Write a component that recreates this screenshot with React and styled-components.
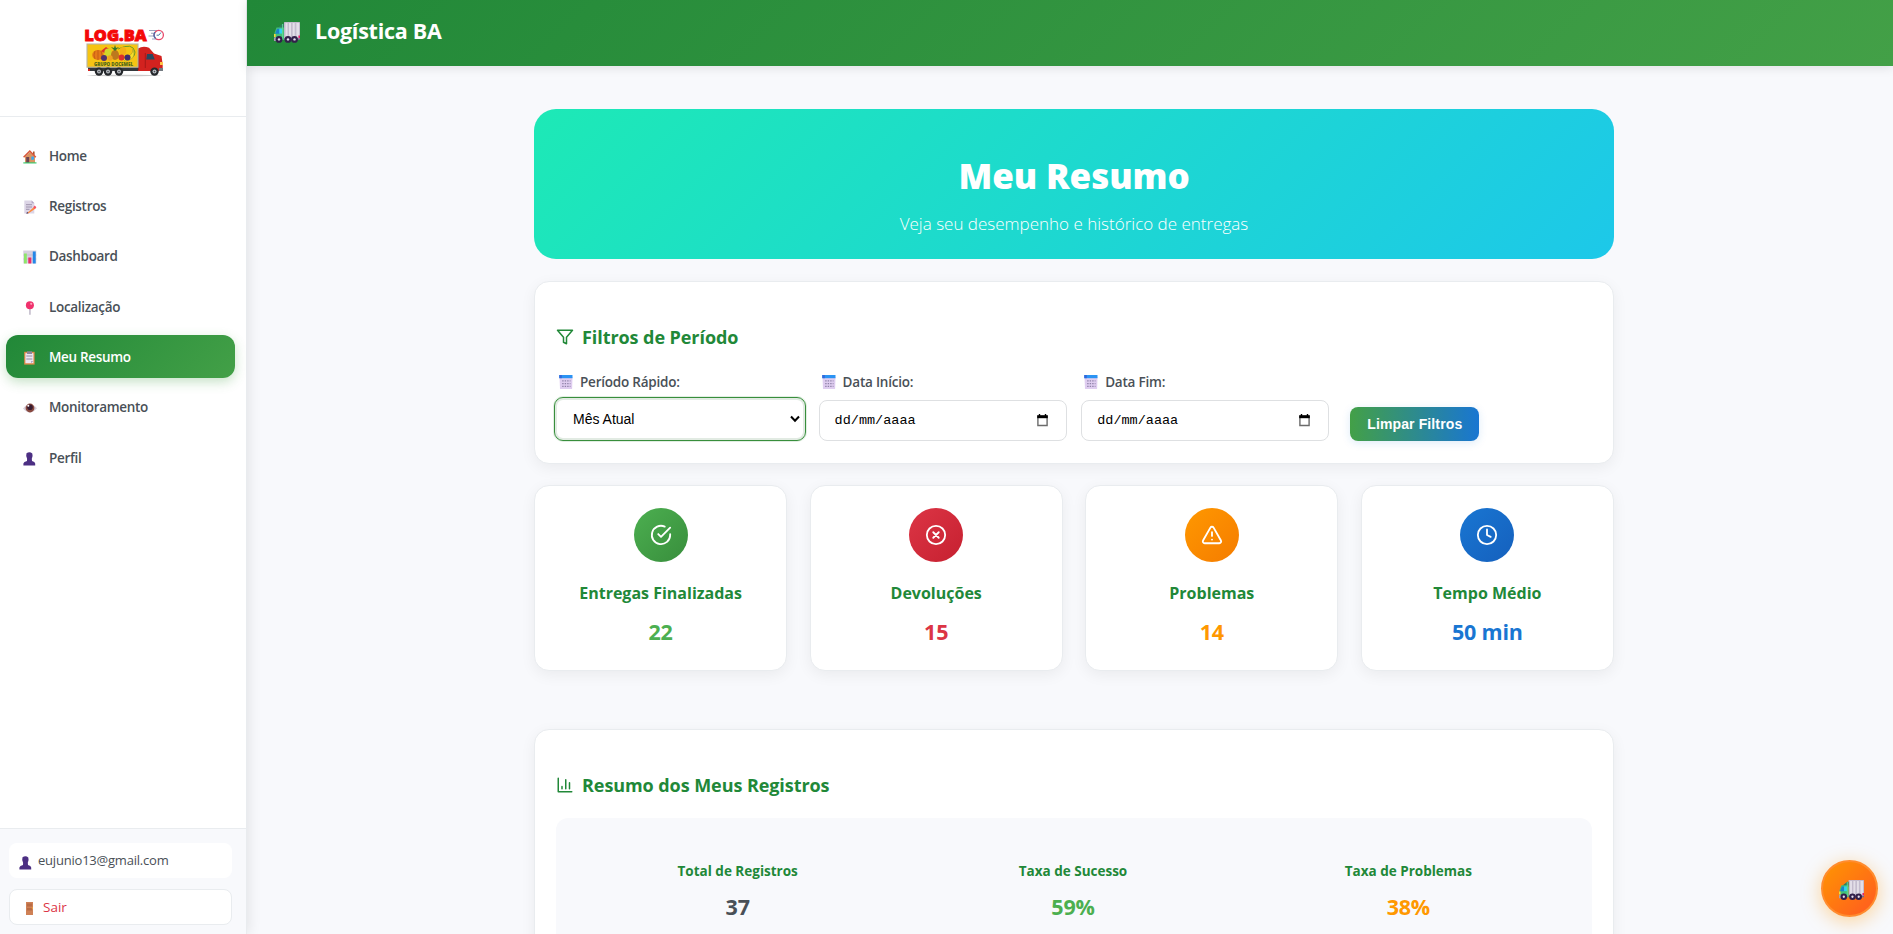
import React from "react";
import styled, { createGlobalStyle } from "styled-components";

const GlobalStyle = createGlobalStyle`
  * { box-sizing: border-box; }
  body {
    margin: 0;
    background: #f8f9fc;
    font-family: "Segoe UI", "Open Sans", "Noto Sans", sans-serif;
    color: #495057;
    overflow: hidden;
  }
  h1, h2, h3, p { margin: 0; }
  svg { display: block; flex: none; overflow: visible; }
`;

const GREEN = "#218838";

const Shell = styled.div`
  display: flex;
  height: 934px;
  overflow: hidden;
  background: #f8f9fc;
`;

const Sidebar = styled.aside`
  width: 247px;
  flex: none;
  display: flex;
  flex-direction: column;
  background: #fff;
  border-right: 1px solid #e9ecef;
  box-shadow: 2px 0 12px rgba(0, 0, 0, 0.09);
`;

const Brand = styled.div`
  height: 117px;
  padding: 28px 0 0 84px;
  border-bottom: 1px solid #e9ecef;
`;

const Nav = styled.nav`
  flex: 1;
  display: flex;
  flex-direction: column;
  gap: 7.4px;
  padding: 16px 11px 0 6px;
`;

const NavItem = styled.a`
  display: flex;
  align-items: center;
  gap: 12px;
  height: 43px;
  padding: 2px 0 0 17px;
  border-radius: 12px;
  font-size: 13.5px;
  font-weight: 600;
  letter-spacing: -0.32px;
  line-height: 20px;
  color: ${(p) => (p.$active ? "#fff" : "#495057")};
  background: ${(p) => (p.$active ? "linear-gradient(135deg, #218838, #43a047)" : "transparent")};
  box-shadow: ${(p) => (p.$active ? "0 4px 12px rgba(67, 160, 71, 0.3)" : "none")};

  svg { margin-top: 2px; }
`;

const Footer = styled.div`
  height: 106px;
  display: flex;
  flex-direction: column;
  gap: 11px;
  padding: 14px 14px 9px 9px;
  border-top: 1px solid #e9ecef;
  background: #f8f9fc;
`;

const UserBox = styled.div`
  display: flex;
  align-items: center;
  gap: 5px;
  height: 35px;
  padding: 0 0 1px 10px;
  border-radius: 8px;
  background: #fff;
  font-size: 13px;
  letter-spacing: -0.21px;

  svg { margin-top: 6px; }
`;

const LogoutButton = styled.button`
  display: flex;
  align-items: center;
  gap: 10px;
  height: 36px;
  padding: 0 0 0 16px;
  border: 1px solid #e9ecef;
  border-radius: 8px;
  background: #fff;
  color: #dc3545;
  font: 400 13.5px "Segoe UI", "Open Sans", sans-serif;

  svg { margin-top: 3px; }
`;

const Content = styled.div`
  flex: 1;
  min-width: 0;
  display: flex;
  flex-direction: column;
`;

const TopBar = styled.header`
  height: 66px;
  flex: none;
  display: flex;
  align-items: center;
  gap: 15px;
  padding: 0 0 5px 27px;
  background: linear-gradient(135deg, #218838, #43a047);
  box-shadow: 0 2px 10px rgba(0, 0, 0, 0.1);
  color: #fff;
  font-size: 21.5px;
  font-weight: 700;
  letter-spacing: -0.25px;
  z-index: 1;

  svg { margin-top: 4px; }
`;

const Main = styled.main`
  width: 1080px;
  margin-left: 287px;
  padding-top: 43px;
  display: flex;
  flex-direction: column;
`;

const Banner = styled.section`
  height: 150px;
  padding-top: 42.5px;
  border-radius: 22px;
  background: linear-gradient(135deg, #1de9b6 0%, #1dc8e9 100%);
  color: #fff;
  text-align: center;
`;

const BannerTitle = styled.h1`
  font-size: 35px;
  line-height: 48px;
  font-weight: 800;
  letter-spacing: -0.1px;
`;

const BannerText = styled.p`
  margin-top: 12.5px;
  font-size: 17px;
  line-height: 24px;
  font-weight: 300;
`;

const Card = styled.section`
  border: 1px solid #e9ecef;
  border-radius: 15px;
  background: #fff;
  box-shadow: 0 4px 15px rgba(0, 0, 0, 0.06);
`;

const FilterCard = styled(Card)`
  height: 183px;
  margin-top: 22px;
  padding: 43px 21px 0;
`;

const SectionTitle = styled.h2`
  display: flex;
  align-items: center;
  gap: 8px;
  font-size: 18px;
  line-height: 24px;
  font-weight: 700;
  letter-spacing: -0.07px;
  color: ${GREEN};
`;

const FilterRow = styled.div`
  display: flex;
  align-items: flex-end;
  gap: 14.6px;
  margin-top: 23px;
`;

const Field = styled.div`
  width: 248px;
  height: 69px;
`;

const Label = styled.label`
  display: flex;
  align-items: center;
  gap: 7px;
  height: 20px;
  margin-bottom: 8px;
  padding-left: 3px;
  font-size: 13.5px;
  font-weight: 600;
  letter-spacing: -0.22px;
`;

const DateBox = styled.div`
  display: flex;
  align-items: center;
  justify-content: space-between;
  height: 41px;
  padding: 0 18px 0 15px;
  border: 1px solid #dee0e2;
  border-radius: 8px;
  background: #fff;
  color: #000;
  font: 13.5px "Liberation Mono", monospace;
`;

const SelectBox = styled.div`
  display: flex;
  align-items: center;
  justify-content: space-between;
  height: 44px;
  margin: -11px -2px 0;
  padding: 0 5px 0 18px;
  border: 1px solid #388e3c;
  border-radius: 9px;
  background: #fff;
  box-shadow: inset 0 0 0 2px #e2ebe3, 0 0 0 1px rgba(56, 142, 60, 0.15);
  color: #000;
  font: 14px "Liberation Sans", Arial, sans-serif;
`;

const SelectField = styled(Field)`
  ${SelectBox} { margin-top: -3px; }
`;

const ClearButton = styled.button`
  width: 129px;
  height: 34px;
  margin-left: 6.5px;
  padding: 0;
  border: 0;
  border-radius: 8px;
  background: linear-gradient(90deg, #43a047, #1976d2);
  box-shadow: 0 2px 8px rgba(25, 118, 210, 0.15);
  color: #fff;
  font: 700 14px "Liberation Sans", Arial, sans-serif;
  letter-spacing: 0.12px;
`;

const StatGrid = styled.div`
  display: grid;
  grid-template-columns: repeat(4, 1fr);
  gap: 22.4px;
  margin-top: 21px;
`;

const StatCard = styled(Card)`
  display: flex;
  flex-direction: column;
  align-items: center;
  height: 186px;
  padding-top: 22px;
`;

const StatIcon = styled.div`
  display: flex;
  align-items: center;
  justify-content: center;
  width: 54px;
  height: 54px;
  border-radius: 50%;
  background: linear-gradient(135deg, ${(p) => p.$from}, ${(p) => p.$to});
`;

const StatTitle = styled.h3`
  margin-top: 20px;
  font-size: 16px;
  line-height: 22px;
  font-weight: 700;
  color: ${GREEN};
`;

const Value = styled.p`
  margin-top: ${(p) => p.$gap}px;
  font-size: 21.5px;
  line-height: 28px;
  font-weight: 700;
  letter-spacing: -0.2px;
  color: ${(p) => p.$color};
`;

const SummaryCard = styled(Card)`
  height: 300px;
  margin-top: 58px;
  padding: 43px 21px 0;
`;

const SummaryPanel = styled.div`
  display: grid;
  grid-template-columns: repeat(3, 1fr);
  gap: 18px;
  height: 160px;
  margin-top: 21px;
  padding: 43px 25px 0 23px;
  border-radius: 12px;
  background: #f8f9fc;
  text-align: center;
`;

const SummaryLabel = styled.h3`
  font-size: 13.5px;
  line-height: 20px;
  font-weight: 700;
  color: ${GREEN};
`;

const Fab = styled.button`
  position: fixed;
  left: 1821px;
  top: 860px;
  display: flex;
  align-items: center;
  justify-content: center;
  width: 57px;
  height: 57px;
  padding: 0;
  border: 2px solid #ff8c2e;
  border-radius: 50%;
  background: linear-gradient(135deg, #ff9800, #ff5722) border-box;
  box-shadow: 0 4px 20px rgba(255, 152, 0, 0.4);

  svg { margin: 4px 0 0 3px; }
`;

const Truck = ({ w = 26 }) => (
  <svg width={w} height={(w * 21) / 26} viewBox="0 0 26 21">
    <rect x="10" y="0" width="16" height="17" rx="0.6" fill="#c3bccd" />
    <path d="M11.5 1h2v15h-2zM15 1h2v15h-2zM18.7 1h2v15h-2zM22.4 1h2.6v15h-2.6z" fill="#e3dfe8" />
    <path d="M3.5 6 8.5 1.8H10V7H3.5z" fill="#2f7d63" />
    <path d="M2.5 5.5H10V18H.5V11z" fill="#44c078" />
    <path d="M3 6.8h2.6v5H1.2z" fill="#1b83c9" />
    <path d="M5.3 6.6h3v5h-3z" fill="#2fd3ee" />
    <path d="M0 12h1.6v3H0z" fill="#fdd835" />
    <path d="M0 15.5h2V19H0z" fill="#a9a0b5" />
    <path d="M8.6 2v15" stroke="#62d796" />
    <path d="M24.4 13.5H26V16h-1.6z" fill="#e5226a" />
    <path d="M10 16.3h16V18H10z" fill="#75688a" />
    {[5, 14, 20.5].map((x) => (
      <g key={x}>
        <circle cx={x} cy="17.4" r="3.4" fill="#32204a" />
        <circle cx={x} cy="17.4" r="1.2" fill="#e6e0ef" />
      </g>
    ))}
  </svg>
);

const Logo = () => (
  <svg width="80" height="57" viewBox="0 0 80 57">
    <text x="0.3" y="13" fontFamily="Open Sans, sans-serif" fontWeight="800" fontSize="16.6" fill="#f40808" stroke="#f40808" strokeWidth="0.9" textLength="62.5" lengthAdjust="spacingAndGlyphs">LOG.BA</text>
    <path d="M65 2.5h8M67 5.3h6M64.5 8h8M68 11h6" stroke="#9aa3bd" strokeWidth="1.1" />
    <circle cx="74.8" cy="7" r="4.6" fill="#fff" stroke="#e84a6b" strokeWidth="1.3" />
    <path d="M71.6 10.4A4.7 4.7 0 0 1 71 4.2" stroke="#476fae" fill="none" strokeWidth="1.3" />
    <path d="M74.8 7.2 77 4.5M74.8 7.2h-2.2" stroke="#34689b" strokeWidth="0.9" />
    <ellipse cx="40" cy="47.5" rx="37" ry="0.8" fill="#c9c9c9" />
    <path d="M4 39h52v4H4z" fill="#34383d" />
    <path d="M54 20.5q5-3 11-.7l5 5.7 7.5 2.4 1.2 8.6V43H54z" fill="#d3221f" />
    <path d="M63 26h5.6l2.2 5.6h-8.6z" fill="#28475f" />
    <path d="M54.5 22v20M61.3 25v15" stroke="#9e1715" strokeWidth="0.8" />
    <path d="M76 34h3v3h-3z" fill="#ffc247" />
    <path d="M75 40h4v3h-4z" fill="#747b82" />
    <rect x="3" y="16" width="51" height="23.2" fill="#f6c413" stroke="#b7b6a6" strokeWidth="1.1" />
    <path d="M34 21q15-7 17 3 0 7-10 8" fill="none" stroke="#6f9c25" strokeWidth="1" />
    <path d="M38 30q11-1 11-9 4 11-8 12z" fill="#f6df2b" stroke="#94962a" strokeWidth="0.5" />
    <ellipse cx="14" cy="27" rx="5.8" ry="5" fill="#e57919" />
    <path d="M14 22v10M11 23q-2 4 0 8M17 23q2 4 0 8" stroke="#ba5411" strokeWidth="0.7" fill="none" />
    <path d="M17 23l5-4 3 2-3 5z" fill="#dc3327" />
    <ellipse cx="24" cy="24.5" rx="3.6" ry="4" fill="#d0d62b" />
    <ellipse cx="31" cy="27" rx="4" ry="5" fill="#bd781d" />
    <path d="M31 23l-4-4 3 1 1-3 1 3 3-1z" fill="#31752c" />
    <ellipse cx="39" cy="23" rx="3.3" ry="4" fill="#f4af18" />
    <circle cx="20" cy="30" r="3" fill="#50306b" />
    <circle cx="26" cy="30" r="2.7" fill="#f0a022" />
    <circle cx="37.5" cy="29.5" r="3" fill="#dc302a" />
    <circle cx="43.5" cy="29.5" r="3" fill="#3e2b70" />
    <text x="10" y="37.8" fontFamily="Open Sans, sans-serif" fontWeight="800" fontSize="5.2" fill="#4e671b" textLength="39" lengthAdjust="spacingAndGlyphs">GRUPO DOCEMEL</text>
    <path d="M4 41h2v2H4z" fill="#d3221f" />
    {[15, 24, 35, 70.5].map((x) => (
      <g key={x}>
        <circle cx={x} cy="43.6" r="4.2" fill="#25282c" />
        <circle cx={x} cy="43.6" r="2" fill="#b9bec4" />
        <circle cx={x} cy="43.6" r="0.8" fill="#45494e" />
      </g>
    ))}
  </svg>
);

const Glyph = ({ children }) => (
  <svg width="14" height="14" viewBox="0 0 14 14">{children}</svg>
);

const HomeIcon = () => (
  <Glyph>
    <path d="M2 6.5 7 2l5 4.5V13H2z" fill="#d99462" />
    <path d="M10 1.5h1.6V5H10z" fill="#a9552f" />
    <path d="M.6 7.3 6.8 1l6 6.2" fill="none" stroke="#d9573c" strokeWidth="1.5" />
    <path d="M3.2 7h3v6h-3z" fill="#6d4352" />
    <path d="M8.3 6.6h2.6v3.2H8.3z" fill="#3aa7ee" />
    <path d="M.3 12.3h13.2v1.2H.3z" fill="#3ecb72" />
  </Glyph>
);
const MemoIcon = () => (
  <Glyph>
    <path d="M1.3.5h7.5L11.3 3v10.5h-10z" fill="#dcd5e6" />
    <path d="M8.6.5 11.3 3.2H8.6z" fill="#b3a7c4" />
    <path d="M3 4.7h6M3 7h6M3 9.3h3.5" stroke="#988ca8" strokeWidth="0.9" />
    <path d="M4 13.3 11 7l1.6 1.6-7 4.7z" fill="#ff8a3d" />
    <path d="M10.3 7.2l1.4-1.7 1.7 1.8-1.5 1.6z" fill="#f3506a" />
    <path d="M3.3 13.8l.8-2 1.4 1.5z" fill="#42305a" />
  </Glyph>
);
const BarsIcon = () => (
  <Glyph>
    <path d="M.3.5h13v13H.3z" fill="#d6d0df" />
    <path d="M.3 5h13M.3 9h13" stroke="#bfb6cc" strokeWidth="0.7" />
    <path d="M1 3.5h2.8v10H1z" fill="#8ee66a" />
    <path d="M5.3 7.5h3v6h-3z" fill="#ee2c6b" />
    <path d="M9.8 1.5h2.9v12H9.8z" fill="#2487e8" />
  </Glyph>
);
const PinIcon = () => (
  <Glyph>
    <path d="M6.4 7h1.1v6.7H6.4z" fill="#a79eb4" />
    <circle cx="6.9" cy="4.2" r="4" fill="#f0326d" />
    <circle cx="8.2" cy="2.8" r="1.1" fill="#ff9bb6" />
  </Glyph>
);
const ClipboardIcon = () => (
  <Glyph>
    <path d="M1.2.8h10.4v12.8H1.2z" fill="#e58a4c" />
    <path d="M2.4 2.2h8v10h-8z" fill="#ece6f2" />
    <path d="M4 .3h5V3H4z" fill="#8e8599" />
    <path d="M3.3 5h6M3.3 8h6" stroke="#8a8198" strokeWidth="0.9" />
    <path d="M8 12.3V10h2.5z" fill="#b3a7c4" />
  </Glyph>
);
const EyeIcon = () => (
  <Glyph>
    <path d="M0 7.5Q6.5-1 14 7.2 7 15.5 0 7.5z" fill="#d9d0dc" />
    <circle cx="7" cy="7" r="4.4" fill="#88493f" />
    <circle cx="7" cy="6.3" r="2.8" fill="#391c31" />
    <circle cx="5.3" cy="4.8" r="1" fill="#fff" />
  </Glyph>
);
const PersonIcon = () => (
  <Glyph>
    <path d="M3.5 1.3Q6.7-.8 9.3 1.5q.9 3-.5 5.2l.2 2.2q3 .7 3.2 2.5v2.1H.4v-2q.3-2 3.6-2.6l.1-2.2Q2.6 4.5 3.5 1.3z" fill="#4c2f83" />
  </Glyph>
);
const DoorIcon = () => (
  <svg width="7" height="13" viewBox="0 0 7 13">
    <path d="M0 0h7v13H0z" fill="#cf8156" />
    <path d="M1 1.5h5v3H1zM1 6h5v2.5H1z" fill="#b96c45" />
    <path d="M5.8 5.5H7v1H5.8z" fill="#ffb52e" />
  </svg>
);
const CalendarEmoji = () => (
  <Glyph>
    <path d="M.5 2h13l-.4 12H1z" fill="#dfcdf0" />
    <path d="M.3 0h13.2v3.2H.3z" fill="#2b93f3" />
    <path d="M.3 0h2.5v3.2H.3z" fill="#3268dc" />
    <path d="M3.2 5.8h8.3M3.2 8.6h8.3M3.2 11.3h8.3" stroke="#8f82a8" strokeWidth="1.2" strokeDasharray="1.4 1.1" />
  </Glyph>
);

const Line = ({ size = 22, width = 2, color = "#fff", children }) => (
  <svg width={size} height={size} viewBox="0 0 24 24" fill="none" stroke={color} strokeWidth={width} strokeLinecap="round" strokeLinejoin="round">
    {children}
  </svg>
);

const PickerIcon = () => (
  <svg width="11" height="13" viewBox="0 0 11 13">
    <path d="M.9 2.5h9.2v9H.9z" fill="none" stroke="#6b6b6b" strokeWidth="1.4" />
    <path d="M.2 1.2h10.6v3H.2z" fill="#000" />
    <path d="M1.8 0h1.4v2H1.8zM7.8 0h1.4v2H7.8z" fill="#000" />
  </svg>
);

const NAV = [
  ["Home", HomeIcon],
  ["Registros", MemoIcon],
  ["Dashboard", BarsIcon],
  ["Localização", PinIcon],
  ["Meu Resumo", ClipboardIcon],
  ["Monitoramento", EyeIcon],
  ["Perfil", PersonIcon],
];

const STATS = [
  {
    title: "Entregas Finalizadas", value: "22", color: "#4caf50", to: "#388e3c",
    icon: <><path d="M22 11.08V12a10 10 0 1 1-5.93-9.14" /><path d="m9 11 3 3L22 4" /></>,
  },
  {
    title: "Devoluções", value: "15", color: "#dc3545", to: "#c62030",
    icon: <><circle cx="12" cy="12" r="10" /><path d="m15 9-6 6M9 9l6 6" /></>,
  },
  {
    title: "Problemas", value: "14", color: "#ff9800", to: "#f57c00",
    icon: <><path d="m21.73 18-8-14a2 2 0 0 0-3.48 0l-8 14A2 2 0 0 0 4 21h16a2 2 0 0 0 1.73-3Z" /><path d="M12 9v4M12 17h.01" /></>,
  },
  {
    title: "Tempo Médio", value: "50 min", color: "#1976d2", to: "#1560bd",
    icon: <><circle cx="12" cy="12" r="10" /><path d="M12 6v6l4 2" /></>,
  },
];

const SUMMARY = [
  ["Total de Registros", "37", "#495057"],
  ["Taxa de Sucesso", "59%", "#4caf50"],
  ["Taxa de Problemas", "38%", "#ff9800"],
];

export default function App() {
  return (
    <>
      <GlobalStyle />
      <Shell>
        <Sidebar>
          <Brand><Logo /></Brand>
          <Nav>
            {NAV.map(([name, Icon]) => (
              <NavItem key={name} $active={name === "Meu Resumo"}>
                <Icon />
                {name}
              </NavItem>
            ))}
          </Nav>
          <Footer>
            <UserBox><PersonIcon />eujunio13@gmail.com</UserBox>
            <LogoutButton><DoorIcon />Sair</LogoutButton>
          </Footer>
        </Sidebar>

        <Content>
          <TopBar><Truck />Logística BA</TopBar>
          <Main>
            <Banner>
              <BannerTitle>Meu Resumo</BannerTitle>
              <BannerText>Veja seu desempenho e histórico de entregas</BannerText>
            </Banner>

            <FilterCard>
              <SectionTitle>
                <Line size={18} color={GREEN}><path d="M22 3H2l8 9.46V19l4 2v-8.54L22 3z" /></Line>
                Filtros de Período
              </SectionTitle>
              <FilterRow>
                <SelectField>
                  <Label><CalendarEmoji />Período Rápido:</Label>
                  <SelectBox>
                    Mês Atual
                    <svg width="10" height="8" viewBox="0 0 10 8"><path d="M1 1.5 5 5.8l4-4.3" fill="none" stroke="#000" strokeWidth="2" /></svg>
                  </SelectBox>
                </SelectField>
                {["Data Início:", "Data Fim:"].map((name) => (
                  <Field key={name}>
                    <Label><CalendarEmoji />{name}</Label>
                    <DateBox>dd/mm/aaaa<PickerIcon /></DateBox>
                  </Field>
                ))}
                <ClearButton>Limpar Filtros</ClearButton>
              </FilterRow>
            </FilterCard>

            <StatGrid>
              {STATS.map((s) => (
                <StatCard key={s.title}>
                  <StatIcon $from={s.color} $to={s.to}><Line>{s.icon}</Line></StatIcon>
                  <StatTitle>{s.title}</StatTitle>
                  <Value $color={s.color} $gap={14}>{s.value}</Value>
                </StatCard>
              ))}
            </StatGrid>

            <SummaryCard>
              <SectionTitle>
                <Line size={18} color={GREEN}><path d="M3 3v18h18M18 17V9M13 17V5M8 17v-3" /></Line>
                Resumo dos Meus Registros
              </SectionTitle>
              <SummaryPanel>
                {SUMMARY.map(([label, value, color]) => (
                  <div key={label}>
                    <SummaryLabel>{label}</SummaryLabel>
                    <Value $color={color} $gap={12}>{value}</Value>
                  </div>
                ))}
              </SummaryPanel>
            </SummaryCard>
          </Main>
        </Content>
        <Fab><Truck w={25} /></Fab>
      </Shell>
    </>
  );
}
